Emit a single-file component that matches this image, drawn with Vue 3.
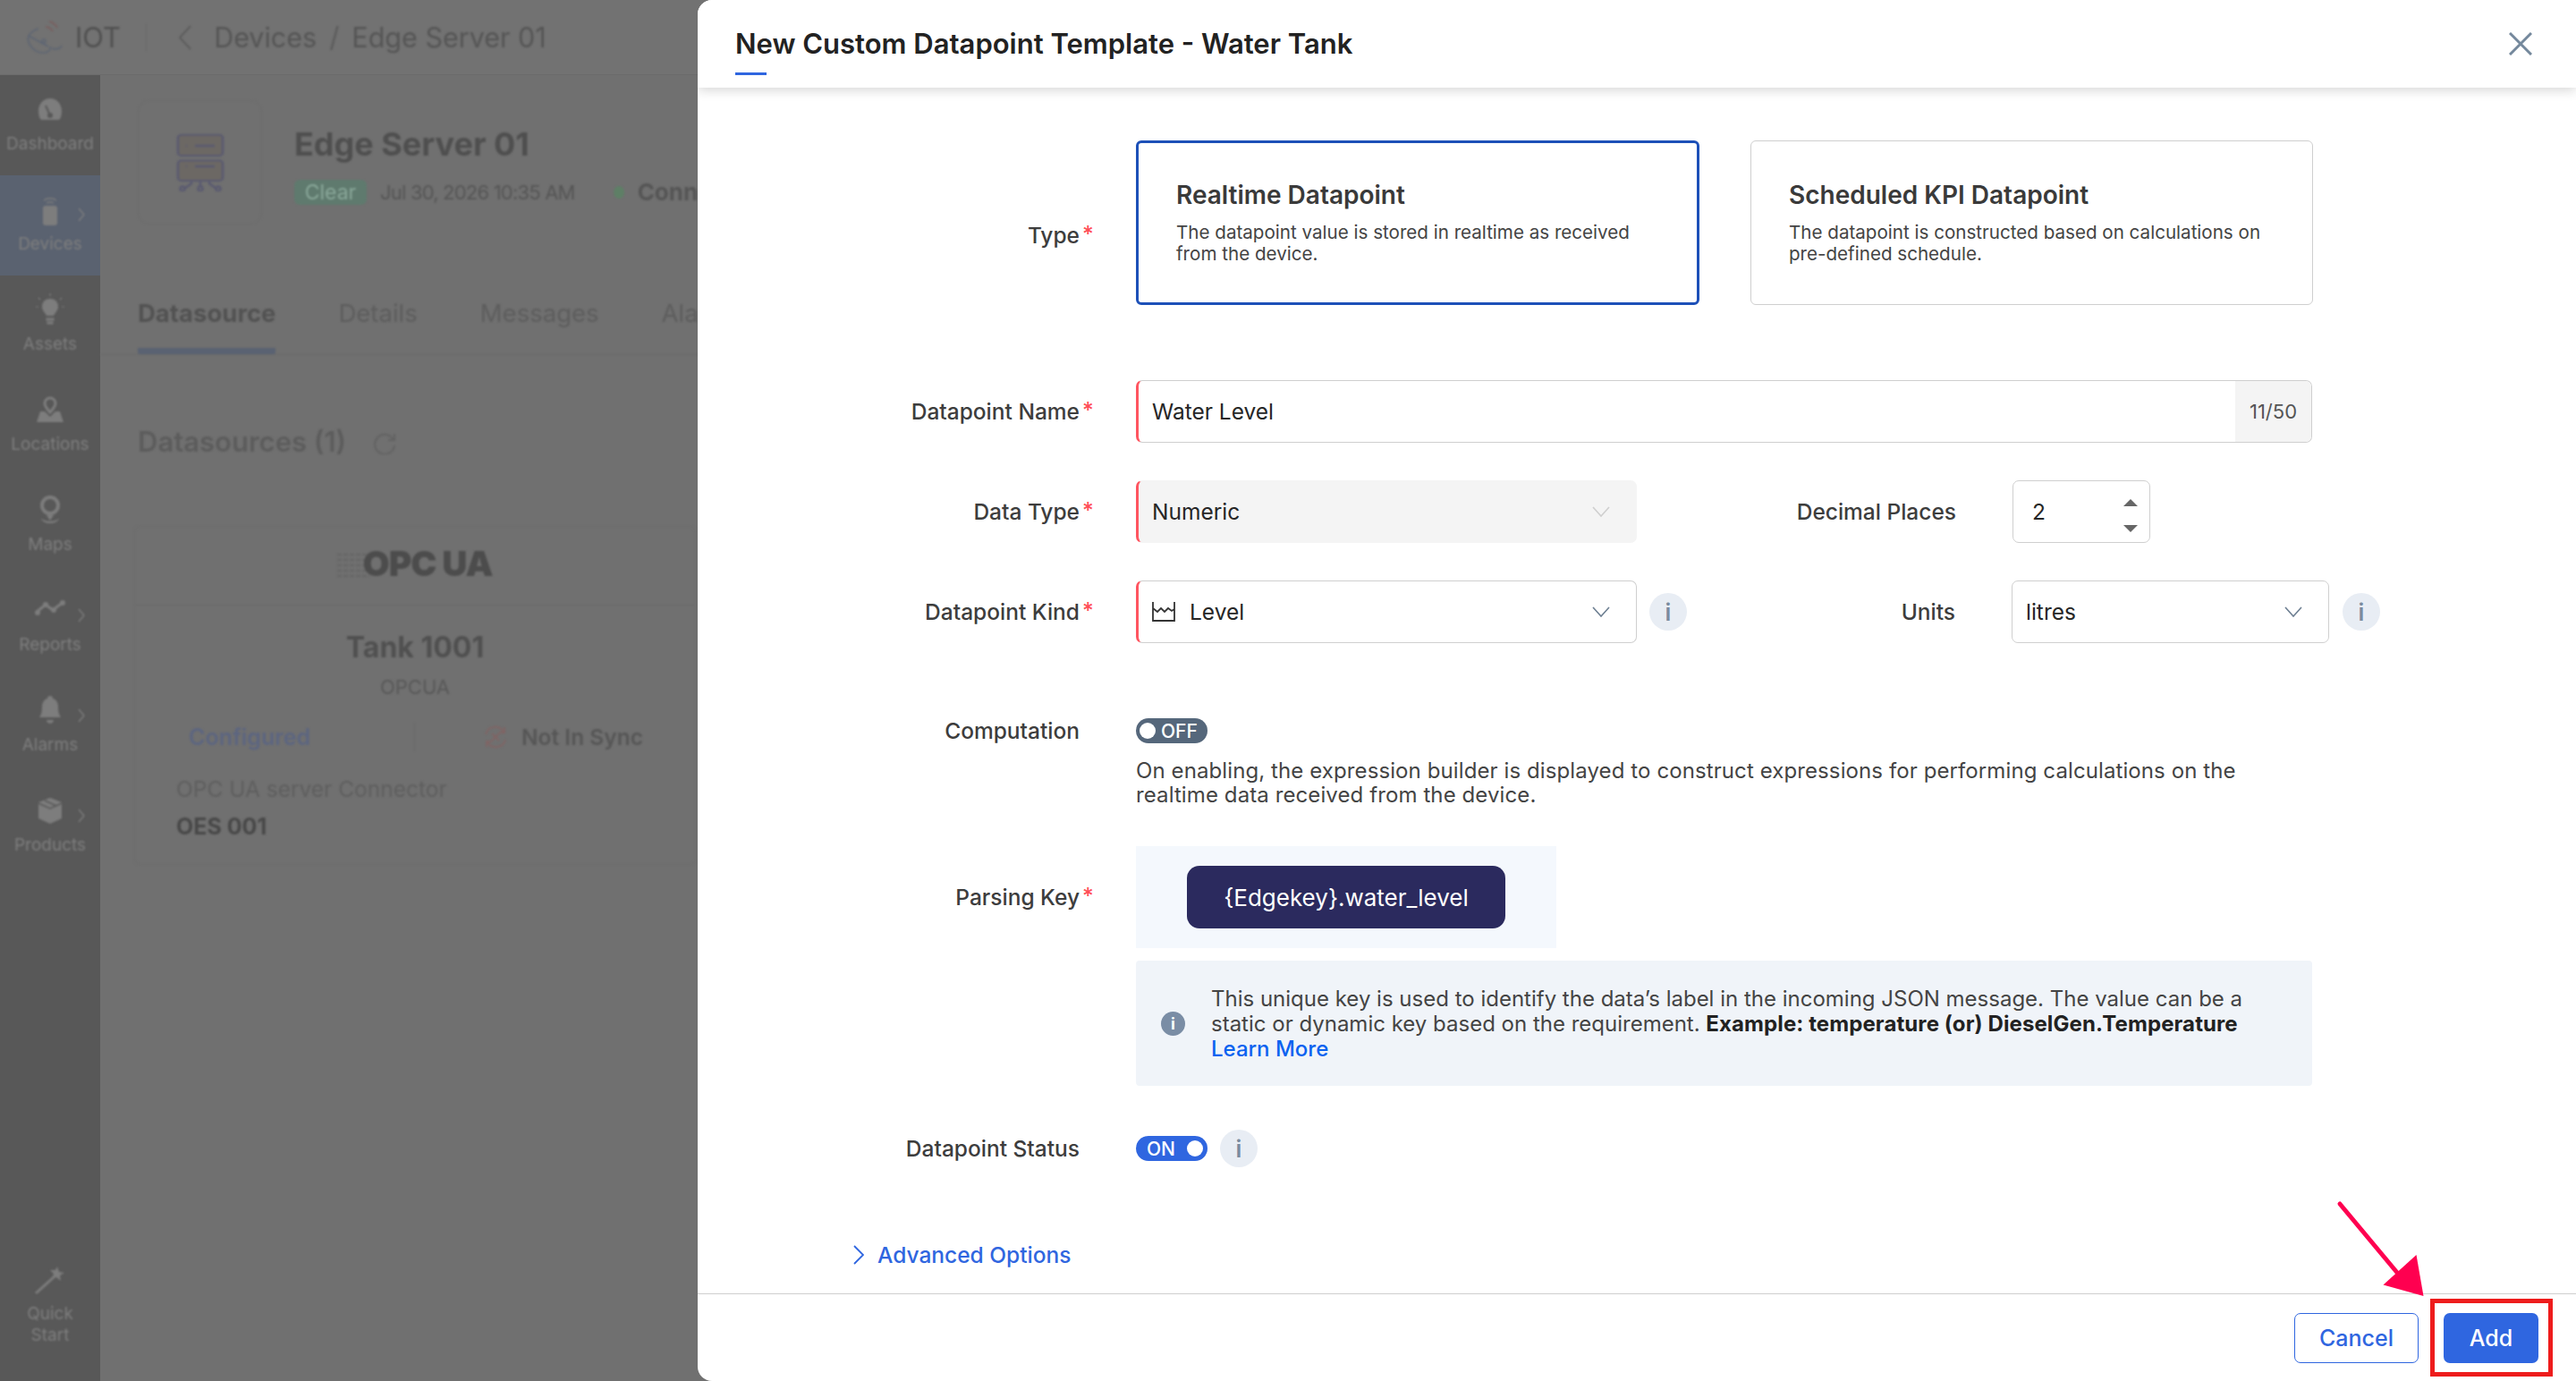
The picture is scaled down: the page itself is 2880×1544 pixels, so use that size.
<script setup>
const navItems = [
  { name: 'Dashboard', icon: 'gauge' },
  { name: 'Devices', icon: 'device', arrow: true, active: true },
  { name: 'Assets', icon: 'bulb' },
  { name: 'Locations', icon: 'location' },
  { name: 'Maps', icon: 'pin' },
  { name: 'Reports', icon: 'chart', arrow: true },
  { name: 'Alarms', icon: 'bell', arrow: true },
  { name: 'Products', icon: 'box', arrow: true }
]
const tabs = ['Datasource', 'Details', 'Messages', 'Alarms', 'Rules']
</script>

<template>
  <div class="app">
    <!-- dimmed page behind the dialog -->
    <div class="page">
      <header class="topbar">
        <div class="blur topbar-in">
          <svg class="logo" viewBox="0 0 44 40" fill="none" stroke-width="1.6">
            <path d="M4 18c-3 8 6 19 16 19 6 0 9-3 8-7M4 18l22 12M4 18c3-4 7-7 11-8" stroke="#5d6573" />
            <circle cx="21" cy="24" r="2" stroke="#5d6573" />
            <path d="M30 32c5 2 10 0 11-3" stroke="#5d6573" />
            <path d="M23 8c3 0 6 2 8 5M27 2c4 1 7 3 9 7" stroke="#7a5c5c" />
          </svg>
          <span class="product">IOT</span>
          <i class="top-div"></i>
          <svg class="back" viewBox="0 0 14 28" fill="none" stroke="#565656" stroke-width="1.6"><path d="M13 1 1 14l12 13" /></svg>
          <span class="crumb">Devices</span>
          <span class="crumb-sep">/</span>
          <span class="crumb">Edge Server 01</span>
        </div>
      </header>

      <div class="page-body">
        <aside class="sidebar">
          <div v-for="item in navItems" :key="item.name" class="nav-item" :class="{ active: item.active }">
            <svg class="nav-icon blur" viewBox="0 0 36 36" fill="#7d7d7d">
              <template v-if="item.icon === 'gauge'">
                <path d="M18 6C11 6 5 12 5 20c0 3 .5 6 1.500 8 .5 2 2 2 4 2h15c2 0 3.500 0 4-2 1-2 1.500-5 1.500-8 0-8-6-14-13-14Z" />
                <path d="m13 14 5 11" stroke="#585858" stroke-width="2" />
                <circle cx="18" cy="25" r="3" fill="#585858" />
              </template>
              <template v-else-if="item.icon === 'device'">
                <rect x="10" y="14" width="16" height="22" rx="3" />
                <path d="M11 8c4-3 10-3 14 0M14 11c2-1.500 6-1.500 8 0" fill="none" stroke="#7d7d7d" stroke-width="1.500" />
              </template>
              <template v-else-if="item.icon === 'bulb'">
                <path d="M18 6c-6 0-9 4-9 9 0 4 3 6 5 10h8c2-4 5-6 5-10 0-5-3-9-9-9Z" />
                <path d="M14 28h8v2h-8zM15 32h6v2h-6zM18 0v3M5 5l2 2M31 5l-2 2M2 15h3M31 15h3" stroke="#7d7d7d" stroke-width="1.200" />
              </template>
              <template v-else-if="item.icon === 'location'">
                <path d="M18 5c-3.500 0-6 2.800-6 6 0 3.500 3.500 7 6 10 2.500-3 6-6.500 6-10 0-3.200-2.500-6-6-6Z" fill="none" stroke="#7d7d7d" stroke-width="3" />
                <path d="M7 20h5l6 6 6-6h5l4 12H3Z" />
              </template>
              <template v-else-if="item.icon === 'pin'">
                <circle cx="18" cy="13" r="9" fill="none" stroke="#7d7d7d" stroke-width="4" />
                <path d="M14 24h8l-4 6ZM8 27c3 5 17 5 20 0-1 8-19 8-20 0Z" />
              </template>
              <template v-else-if="item.icon === 'chart'">
                <path d="m3 20 10-8 8 6 12-9" fill="none" stroke="#7d7d7d" stroke-width="3" />
                <circle cx="4" cy="21" r="3" /><circle cx="13" cy="12" r="3" /><circle cx="22" cy="18" r="3" /><circle cx="32" cy="10" r="3" />
              </template>
              <template v-else-if="item.icon === 'bell'">
                <path d="M18 2c-2 0-3 1-3 3-4 1-6 5-6 9 0 6-1 9-3 12h24c-2-3-3-6-3-12 0-4-2-8-6-9 0-2-1-3-3-3Z" />
                <path d="M14 29h8c0 5-8 5-8 0Z" />
              </template>
              <template v-else>
                <path d="M18 4 31 9v18l-13 6-13-6V9Z" />
                <path d="m5 10 13 6 13-6M12 7l13 6" fill="none" stroke="#585858" stroke-width="1.500" />
              </template>
            </svg>
            <span class="nav-label blur">{{ item.name }}</span>
            <svg v-if="item.arrow" class="nav-arrow blur" viewBox="0 0 8 16" fill="none" stroke="#808080" stroke-width="1.200"><path d="m1 1 6 7-6 7" /></svg>
          </div>
          <div class="nav-item quick">
            <svg class="nav-icon blur" viewBox="0 0 36 36" fill="#7d7d7d">
              <path d="m2 34 20-18" stroke="#7d7d7d" stroke-width="3" />
              <path d="m26 4 2 6 6 1-5 3 1 6-5-4-5 2 2-6-4-4 6 0Z" />
            </svg>
            <span class="nav-label blur">Quick<br />Start</span>
          </div>
        </aside>

        <main class="content blur">
          <section class="device-head">
            <div class="device-thumb">
              <svg viewBox="0 0 56 64" width="56" height="64" fill="none" stroke="#5a5a70" stroke-width="2.500">
                <rect x="3" y="1" width="50" height="29" rx="4" fill="#6c6864" transform="scale(1 .8)" />
                <rect x="3" y="37" width="50" height="28" rx="4" fill="#6c6864" transform="scale(1 .8)" />
                <path d="M12 13h1M12 36h1M22 13h22M22 36h22M28 53v6M18 53v2l-8 6M38 53v2l8 6" />
                <circle cx="28" cy="61" r="2.500" /><circle cx="8" cy="61" r="2.500" /><circle cx="48" cy="61" r="2.500" />
              </svg>
            </div>
            <div class="device-meta">
              <h1>Edge Server 01</h1>
              <div class="meta-row">
                <span class="badge">Clear</span>
                <span class="date">Jul 30, 2026 10:35 AM</span>
                <i class="dot"></i>
                <b class="conn">Connected</b>
              </div>
            </div>
          </section>

          <nav class="tabs">
            <span v-for="(t, i) in tabs" :key="t" class="tab" :class="{ on: i === 0 }">{{ t }}</span>
          </nav>

          <h2 class="ds-title">Datasources (1)
            <svg viewBox="0 0 28 28" width="28" height="28" fill="none" stroke="#626262" stroke-width="2"><path d="M24 5v7h-7M23 12a11 11 0 1 0 1 6" /></svg>
          </h2>

          <div class="ds-card">
            <div class="ds-logo">
              <svg class="streaks" viewBox="0 0 40 32" width="40" height="32" stroke="#5b5b5b" stroke-width="1.200"><path d="M0 6h36M0 12h36M0 18h36M0 24h36M0 30h36" stroke-dasharray="5 2" /></svg>
              <span>OPC UA</span>
            </div>
            <div class="ds-name">Tank 1001</div>
            <div class="ds-type">OPCUA</div>
            <div class="ds-status">
              <span class="configured">Configured</span>
              <span class="sync">
                <svg viewBox="0 0 28 28" width="28" height="28" fill="none" stroke="#806464" stroke-width="1.800"><path d="M3 11a11 11 0 0 1 20-3M25 17a11 11 0 0 1-20 3M24 3v6h-6M4 25v-6h6M10 10l8 8M18 10l-8 8" /></svg>
                Not In Sync
              </span>
            </div>
            <div class="ds-conn">OPC UA server Connector</div>
            <div class="ds-id">OES 001</div>
          </div>
        </main>
      </div>
    </div>

    <!-- dialog -->
    <div class="modal">
      <div class="modal-head">
        <div>
          <div class="modal-title">New Custom Datapoint Template - Water Tank</div>
          <i class="title-mark"></i>
        </div>
        <svg class="close" viewBox="0 0 26 26" fill="none" stroke="#74889c" stroke-width="3"><path d="m1 1 24 24M25 1 1 25" /></svg>
      </div>

      <div class="modal-body">
        <div class="row type-row">
          <label class="lbl req">Type<em>*</em></label>
          <div class="type-cards">
            <div class="type-card sel">
              <h3>Realtime Datapoint</h3>
              <p>The datapoint value is stored in realtime as received from the device.</p>
            </div>
            <div class="type-card">
              <h3>Scheduled KPI Datapoint</h3>
              <p>The datapoint is constructed based on calculations on pre-defined schedule.</p>
            </div>
          </div>
        </div>

        <div class="row name-row">
          <label class="lbl req">Datapoint Name<em>*</em></label>
          <div class="field mand name-field">
            <span class="val">Water Level</span>
            <span class="counter">11/50</span>
          </div>
        </div>

        <div class="row gap-row">
          <label class="lbl req">Data Type<em>*</em></label>
          <div class="field mand select disabled">
            <span class="val">Numeric</span>
            <svg class="chev" viewBox="0 0 20 12" fill="none" stroke="#cfcfcf" stroke-width="1.600"><path d="m1 1 9 10 9-10" /></svg>
          </div>
          <label class="lbl2">Decimal Places</label>
          <div class="field number">
            <span class="val">2</span>
            <div class="spin"><i class="up"></i><i class="down"></i></div>
          </div>
        </div>

        <div class="row gap-row">
          <label class="lbl req">Datapoint Kind<em>*</em></label>
          <div class="field mand select">
            <svg class="tank" viewBox="0 0 26 22" fill="none" stroke="#333" stroke-width="1.800"><path d="M1 0v21h24V0M1 7l5 4 4-4 4 4 4-4 4 3 3-2" /></svg>
            <span class="val">Level</span>
            <svg class="chev" viewBox="0 0 20 12" fill="none" stroke="#6d7f92" stroke-width="1.600"><path d="m1 1 9 10 9-10" /></svg>
          </div>
          <span class="info kind-info">i</span>
          <label class="lbl2 units-lbl">Units</label>
          <div class="field select units">
            <span class="val">litres</span>
            <svg class="chev" viewBox="0 0 20 12" fill="none" stroke="#6d7f92" stroke-width="1.600"><path d="m1 1 9 10 9-10" /></svg>
          </div>
          <span class="info units-info">i</span>
        </div>

        <div class="row comp-row">
          <label class="lbl">Computation</label>
          <div class="toggle off"><i></i><span>OFF</span></div>
        </div>
        <p class="comp-help">On enabling, the expression builder is displayed to construct expressions for performing calculations on the realtime data received from the device.</p>

        <div class="row key-row">
          <label class="lbl req">Parsing Key<em>*</em></label>
          <div class="key-panel"><span class="key-pill">{Edgekey}.water_level</span></div>
        </div>

        <div class="hint">
          <span class="hint-icon">i</span>
          <p>This unique key is used to identify the data’s label in the incoming JSON message. The value can be a static or dynamic key based on the requirement. <b>Example: temperature (or) DieselGen.Temperature</b> <a>Learn More</a></p>
        </div>

        <div class="row status-row">
          <label class="lbl">Datapoint Status</label>
          <div class="toggle on"><span>ON</span><i></i></div>
          <span class="info status-info">i</span>
        </div>

        <div class="advanced">
          <svg viewBox="0 0 12 22" width="12" height="22" fill="none" stroke="#2f66e0" stroke-width="1.800"><path d="m1 1 10 10L1 21" /></svg>
          <span>Advanced Options</span>
        </div>
      </div>

      <div class="modal-foot">
        <button class="btn ghost">Cancel</button>
        <button class="btn primary">Add</button>
      </div>
    </div>

    <!-- screenshot annotation -->
    <div class="callout"></div>
    <svg class="arrow" viewBox="0 0 2880 1544" fill="#ff0050" stroke="#ff0050">
      <path d="M2616 1346 2686 1430" stroke-width="5" stroke-linecap="round" fill="none" />
      <path d="M2701.500 1403 2709.500 1449 2664.500 1436.500Z" stroke="none" />
    </svg>
  </div>
</template>

<style>
html, body { margin: 0; background: #707070; }
</style>

<style scoped>
.app {
  position: relative;
  width: 100vw;
  height: 100vh;
  overflow: hidden;
  font-family: Inter, "Liberation Sans", sans-serif;
  color: #333;
}
.blur { filter: blur(1px); }

/* page behind */
.page {
  display: flex;
  flex-direction: column;
  height: 100%;
  background: #707070;
  color: #525252;
}
.topbar {
  flex: 0 0 84px;
  box-sizing: border-box;
  border-bottom: 1px solid #6b6b6b;
  background: #727272;
}
.topbar-in {
  display: flex;
  align-items: center;
  height: 83px;
  padding-left: 28px;
}
.logo { width: 44px; height: 40px; }
.product { margin-left: 12px; font-size: 31px; color: #505050; }
.top-div { width: 1px; height: 30px; margin: 0 36px 0 28px; background: #6a6a6a; }
.back { width: 14px; height: 28px; margin-right: 25px; }
.crumb { font-size: 30.500px; color: #555; white-space: nowrap; }
.crumb-sep { margin: 0 14px; font-size: 31px; color: #5c5c5c; }
.page-body { flex: 1; display: flex; min-height: 0; }
.sidebar {
  flex: 0 0 112px;
  display: flex;
  flex-direction: column;
  background: #585858;
}
.nav-item {
  position: relative;
  box-sizing: border-box;
  height: 112px;
  padding-top: 20px;
  display: flex;
  flex-direction: column;
  align-items: center;
  gap: 9px;
}
.nav-item.active { background: #5a6270; }
.nav-item.quick { margin-top: auto; height: auto; padding-bottom: 39px; }
.nav-icon { width: 36px; height: 36px; flex: none; }
.nav-label {
  font-size: 19px;
  line-height: 24px;
  color: #7e7e7e;
  text-align: center;
}
.nav-arrow { position: absolute; left: 87px; top: 36px; width: 8px; height: 16px; }
.content { flex: 1; min-width: 0; padding: 28px 0 0 42px; white-space: nowrap; }
.device-head { display: flex; gap: 36px; }
.device-thumb {
  box-sizing: border-box;
  width: 139px;
  height: 139px;
  display: flex;
  align-items: center;
  justify-content: center;
  border: 1px solid #6c6c6c;
  border-radius: 12px;
  flex: none;
}
.device-meta { padding-top: 27px; }
.device-meta h1 { margin: 0; font-size: 36px; line-height: 44px; font-weight: 700; color: #4f4f4f; }
.meta-row { display: flex; align-items: center; margin-top: 16px; }
.badge {
  box-sizing: border-box;
  height: 28px;
  width: 81px;
  text-align: center;
  line-height: 28px;
  font-size: 23px;
  background: #5f7a6e;
  color: #8aa89a;
  border-radius: 6px;
}
.date { margin-left: 15px; font-size: 22px; letter-spacing: -0.8px; color: #555; }
.dot { width: 12px; height: 14px; margin-left: 43px; border-radius: 50%; background: #5e7f66; }
.conn { margin-left: 15px; font-size: 26px; color: #555; }
.tabs {
  display: flex;
  gap: 70px;
  margin: 81px 0 0 -42px;
  padding-left: 42px;
  border-bottom: 1px solid #6a6a6a;
}
.tab {
  padding-bottom: 28px;
  font-size: 27.500px;
  line-height: 36px;
  color: #5d5d5d;
}
.tab.on {
  font-weight: 700;
  color: #525252;
  border-bottom: 7px solid #5a6272;
  padding-bottom: 21px;
  border-radius: 0 0 2px 2px;
}
.ds-title {
  display: flex;
  align-items: center;
  gap: 30px;
  margin: 77px 0 0;
  font-size: 31px;
  line-height: 40px;
  font-weight: 600;
  color: #5c5c5c;
}
.ds-card {
  box-sizing: border-box;
  width: 628px;
  height: 379px;
  margin: 74px 0 0 -4px;
  border: 1px solid #6c6c6c;
  border-radius: 6px;
  text-align: center;
}
.ds-logo {
  box-sizing: border-box;
  height: 88px;
  padding-bottom: 6px;
  border-bottom: 1px solid #6a6a6a;
  display: flex;
  align-items: center;
  justify-content: center;
}
.ds-logo span {
  margin-left: -12px;
  font-size: 39px;
  font-weight: 900;
  letter-spacing: -1px;
  color: #4c4c4c;
}
.ds-name { margin-top: 27px; font-size: 32px; line-height: 40px; font-weight: 700; color: #505050; }
.ds-type { margin-top: 10px; font-size: 22px; line-height: 28px; color: #585858; }
.ds-status {
  display: grid;
  grid-template-columns: 1fr 1fr;
  height: 32px;
  margin-top: 26px;
  font-size: 25px;
  font-weight: 600;
  line-height: 32px;
  text-align: left;
}
.configured { padding-left: 60px; color: #5c6580; border-right: 1px solid #6a6a6a; }
.sync { display: flex; align-items: center; gap: 15px; padding-left: 76px; font-size: 24.500px; color: #565656; }
.ds-conn { margin-top: 27px; padding-left: 46px; font-size: 24.500px; line-height: 30px; text-align: left; color: #5e5e5e; }
.ds-id { margin-top: 12px; padding-left: 46px; font-size: 25px; line-height: 30px; font-weight: 700; text-align: left; color: #484848; }

/* dialog */
.modal {
  position: absolute;
  top: 0;
  right: 0;
  bottom: 0;
  left: 780px;
  display: flex;
  flex-direction: column;
  background: #fff;
  border-radius: 16px 0 0 16px;
  overflow: hidden;
}
.modal-head {
  position: relative;
  z-index: 1;
  flex: 0 0 98px;
  box-sizing: border-box;
  display: flex;
  justify-content: space-between;
  padding: 29px 49px 0 42px;
  background: #fff;
  box-shadow: 0 3px 12px rgba(0, 0, 0, 0.16);
}
.modal-title { font-size: 31px; line-height: 40px; font-weight: 600; color: #222; white-space: nowrap; }
.title-mark { display: block; width: 35px; height: 3px; margin-top: 12px; background: #2f66e0; }
.close { width: 26px; height: 26px; margin-top: 7px; }
.modal-body { flex: 1; min-height: 0; padding-top: 59px; }
.row { display: flex; align-items: center; }
.lbl {
  flex: 0 0 427px;
  box-sizing: border-box;
  position: relative;
  margin-right: 63px;
  text-align: right;
  font-size: 24.500px;
  line-height: 32px;
  font-weight: 500;
  color: #3d3d3d;
  white-space: nowrap;
}
.lbl em {
  position: absolute;
  left: 100%;
  top: -2px;
  margin-left: 3px;
  font-style: normal;
  color: #ff4d58;
}
.type-row { align-items: flex-start; }
.type-row .lbl { margin-top: 90px; }
.type-cards { display: flex; gap: 57px; }
.type-card {
  box-sizing: border-box;
  width: 629px;
  height: 184px;
  padding: 42px 20px 0 42px;
  border: 1px solid #cfcfcf;
  border-radius: 6px;
}
.type-card.sel { width: 630px; border: 3px solid #1d50b8; padding: 40px 20px 0 42px; }
.type-card h3 { margin: 0; font-size: 28px; line-height: 36px; font-weight: 600; color: #3a3a3a; }
.type-card p { margin: 12px 0 0; max-width: 540px; font-size: 20.600px; line-height: 24px; color: #444; }
.name-row { margin-top: 84px; }
.gap-row { margin-top: 42px; }
.field {
  position: relative;
  box-sizing: border-box;
  height: 70px;
  display: flex;
  align-items: center;
  padding-left: 15px;
  border: 1px solid #cfcfcf;
  border-radius: 7px;
  font-size: 24.500px;
  color: #262626;
}
.mand { border-left: 3px solid #ff5560; }
.name-field { width: 1315px; padding-right: 0; overflow: hidden; }
.counter {
  margin-left: auto;
  width: 85px;
  height: 100%;
  display: flex;
  align-items: center;
  justify-content: center;
  background: #f4f4f4;
  font-size: 22px;
  color: #555;
}
.select { width: 560px; }
.select .chev { position: absolute; right: 29px; top: 28px; width: 20px; height: 12px; }
.disabled { background: #f4f4f4; border-top-color: #f4f4f4; border-right-color: #f4f4f4; border-bottom-color: #f4f4f4; }
.tank { width: 26px; height: 22px; margin-right: 16px; }
.lbl2 {
  width: 357px;
  text-align: right;
  margin-right: 63px;
  font-size: 24.500px;
  font-weight: 500;
  color: #3d3d3d;
  white-space: nowrap;
}
.units-lbl { width: 300px; }
.number { width: 154px; padding-left: 21px; }
.spin { position: absolute; right: 13px; top: 20px; display: flex; flex-direction: column; gap: 21px; }
.spin i { display: block; width: 0; height: 0; border-left: 8px solid transparent; border-right: 8px solid transparent; }
.spin .up { border-bottom: 8px solid #666; }
.spin .down { border-top: 8px solid #666; }
.units { width: 355px; padding-left: 15px; }
.units .chev { right: 29px; }
.info {
  flex: none;
  width: 42px;
  height: 42px;
  display: flex;
  align-items: center;
  justify-content: center;
  border-radius: 50%;
  background: #e8edf4;
  font-size: 26px;
  font-weight: 600;
  color: #7a8b9f;
}
.kind-info { margin-left: 14px; }
.units-info { margin-left: 15px; }
.status-info { margin-left: 14px; }
.comp-row { margin-top: 82px; height: 32px; }
.toggle {
  box-sizing: border-box;
  width: 80px;
  height: 28px;
  display: flex;
  align-items: center;
  border-radius: 14px;
  color: #fff;
  font-size: 21px;
  font-weight: 500;
}
.toggle i { width: 18px; height: 18px; border-radius: 50%; background: #fff; flex: none; }
.toggle.off { background: #55677b; padding-left: 4px; gap: 6px; }
.toggle.on { background: #2f66e0; padding: 0 5px 0 12px; justify-content: space-between; }
.comp-help {
  margin: 15px 0 0 490px;
  width: 1290px;
  font-size: 24px;
  letter-spacing: 0.1px;
  line-height: 27px;
  color: #444;
}
.key-row { margin-top: 44px; }
.key-panel {
  box-sizing: border-box;
  width: 470px;
  height: 114px;
  padding: 22px 57px;
  background: #f4f8fd;
}
.key-pill {
  display: flex;
  align-items: center;
  justify-content: center;
  height: 70px;
  border-radius: 14px;
  background: #2b2a5e;
  color: #fff;
  font-size: 26px;
  white-space: nowrap;
}
.hint {
  box-sizing: border-box;
  width: 1315px;
  height: 140px;
  margin: 14px 0 0 490px;
  display: flex;
  align-items: center;
  padding-left: 28px;
  background: #f0f4f9;
  border-radius: 4px;
}
.hint-icon {
  flex: none;
  width: 27px;
  height: 27px;
  margin-right: 29px;
  display: flex;
  align-items: center;
  justify-content: center;
  border-radius: 50%;
  background: #7a8da5;
  color: #fff;
  font-size: 18px;
  font-weight: 700;
}
.hint p { margin: 2px 0 0; width: 1170px; font-size: 24px; line-height: 28px; color: #444; }
.hint b { font-weight: 700; letter-spacing: 0.1px; color: #222; }
.hint a { display: block; color: #0a62f0; font-weight: 500; }
.status-row { margin-top: 49px; }
.advanced {
  display: flex;
  align-items: center;
  gap: 15px;
  margin: 82px 0 0 174px;
  font-size: 24.500px;
  line-height: 32px;
  font-weight: 500;
  color: #2f66e0;
}
.modal-foot {
  flex: 0 0 98px;
  box-sizing: border-box;
  display: flex;
  justify-content: flex-end;
  gap: 28px;
  padding: 21px 42px 0 0;
  border-top: 1px solid #cfcfcf;
}
.btn {
  height: 56px;
  box-sizing: border-box;
  border-radius: 7px;
  font-family: inherit;
  font-size: 25px;
  font-weight: 500;
}
.ghost { width: 139px; background: #fff; border: 1px solid #2f66e0; color: #2f66e0; }
.primary { width: 106px; background: #2f66e0; border: 0; color: #fff; }

/* annotation */
.callout {
  position: absolute;
  left: 2717px;
  top: 1452px;
  width: 137px;
  height: 87px;
  box-sizing: border-box;
  border: 5px solid #ee1c1c;
}
.arrow { position: absolute; inset: 0; width: 2880px; height: 1544px; pointer-events: none; }
</style>
